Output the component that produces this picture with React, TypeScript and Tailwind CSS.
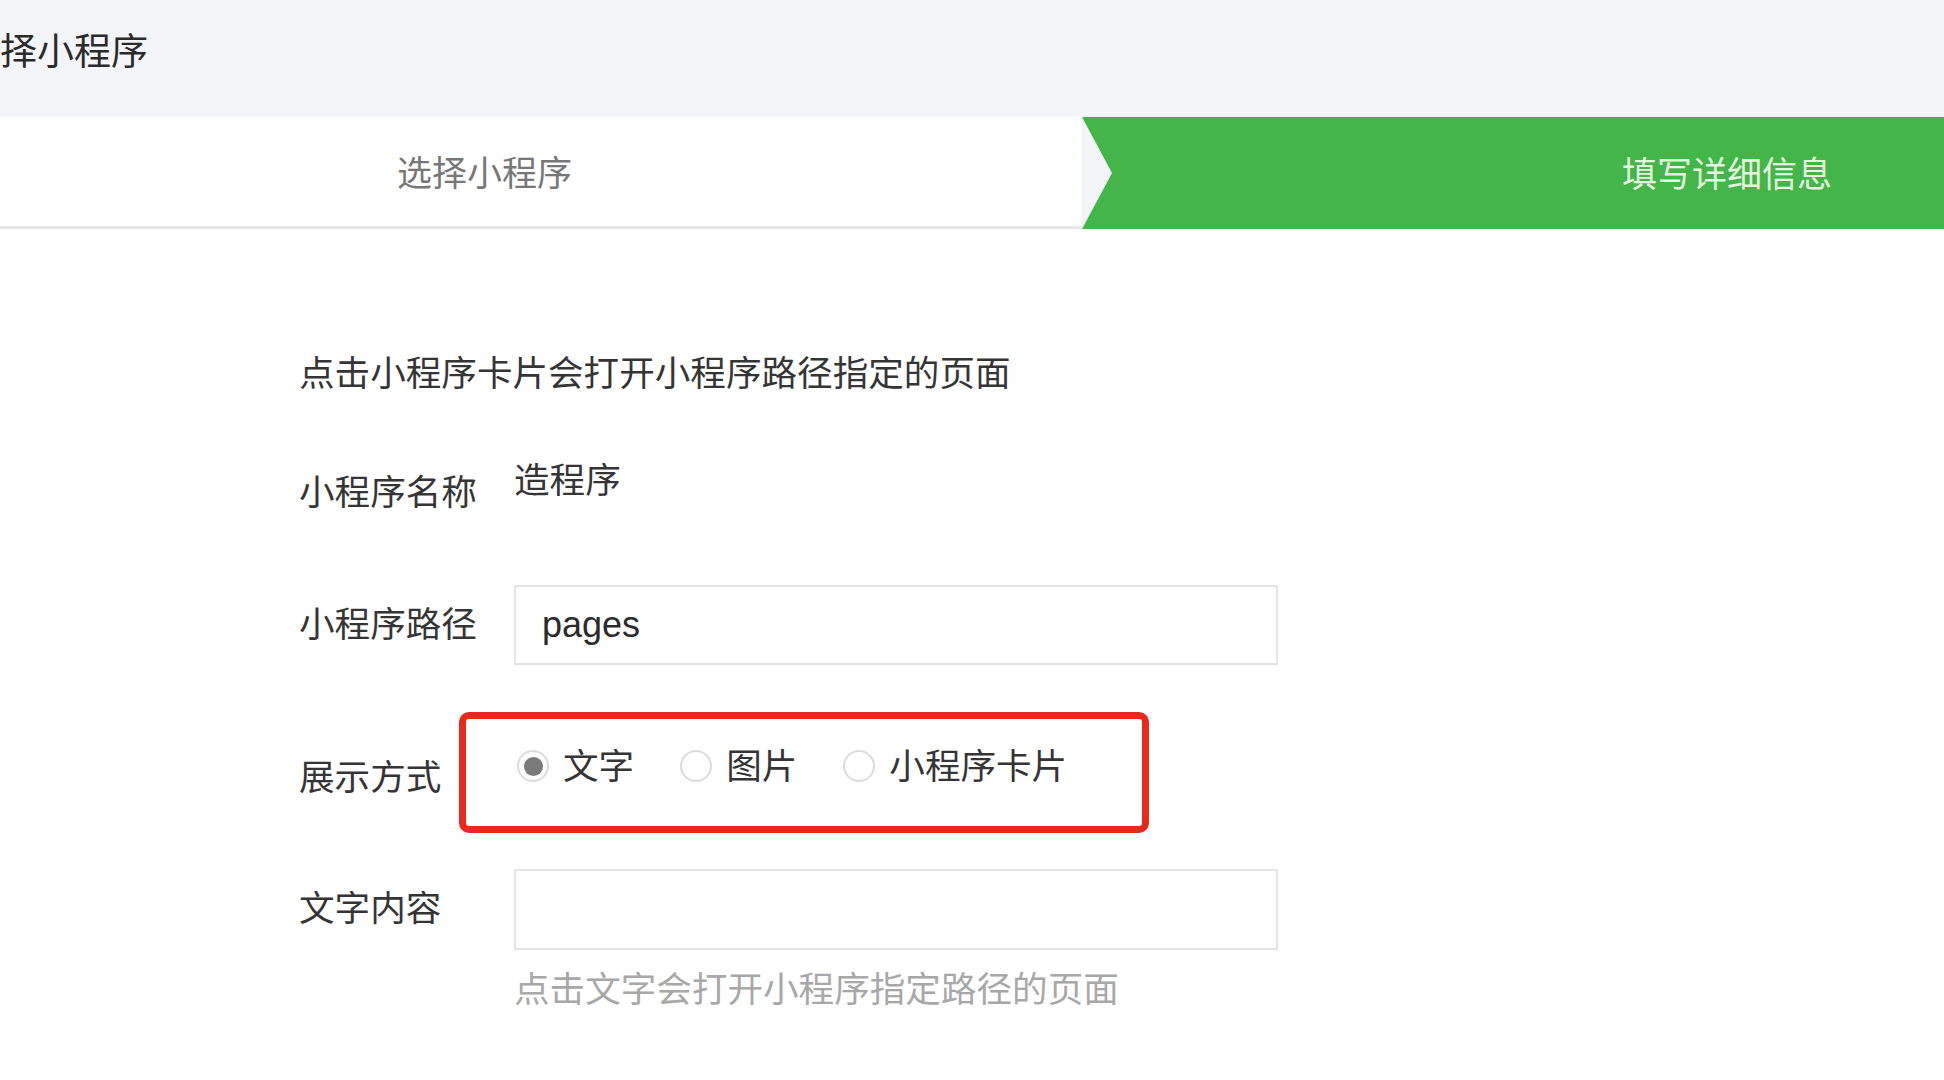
import { useState } from "react";

const labelCls = "w-[215px] shrink-0 text-[#353535]";

const App = () => {
  const [mode, setMode] = useState("text");

  return (
    <div className="w-[1944px] h-[1080px] overflow-hidden bg-white font-['Noto_Sans_CJK_SC','Noto_Sans',sans-serif] text-[35.6px] leading-[44px] text-[#353535]">
      {/* HEADER */}
      <div className="h-[117px] bg-[#f4f5f9] pt-[27px]">
        <h1 className="ml-[-37px] text-[37px] leading-[44px] text-[#2b2b2b] whitespace-nowrap">选择小程序</h1>
      </div>

      {/* STEPS */}
      <div className="flex h-[112px] bg-[#f4f5f9]">
        <div className="w-[1082px] shrink-0 flex items-center pl-[397px] pb-[2px] bg-white border-b-[3px] border-[#e6e6e6] text-[35px] text-[#777]">
          选择小程序
        </div>
        <div className="flex-1 flex items-center pl-[540px] pb-[3px] bg-[#44b549] text-[35px] text-[#e4f6df] [clip-path:polygon(0_0,100%_0,100%_100%,0_100%,30px_50%)]">
          填写详细信息
        </div>
      </div>

      {/* FORM */}
      <div className="pl-[299px]">
        <p className="mt-[120px]">点击小程序卡片会打开小程序路径指定的页面</p>

        <div className="flex items-start mt-[63px]">
          <div className={labelCls + " pt-[12px]"}>小程序名称</div>
          <div>造程序</div>
        </div>

        <div className="flex items-center mt-[73px]">
          <div className={labelCls + " pb-[7px]"}>小程序路径</div>
          <input
            type="text"
            defaultValue="pages"
            className="w-[764px] h-[80px] px-[26px] border-2 border-[#e4e4e4] bg-white outline-0 text-[36px] text-[#2b2b2b] font-['Liberation_Sans',sans-serif]"
          />
        </div>

        <div className="flex items-center mt-[47px]">
          <div className="w-[160px] shrink-0 pt-[4px]">展示方式</div>
          <div className="w-[690px] h-[121px] flex items-center gap-[46px] pl-[51px] pb-[17px] border-[7px] border-[#e8291c] rounded-[10px]">
            {[
              ["text", "文字"],
              ["image", "图片"],
              ["card", "小程序卡片"],
            ].map(([k, v]) => (
              <label key={k} onClick={() => setMode(k)} className="flex items-center gap-[14px] cursor-pointer">
                <span className="w-[32px] h-[32px] mt-[4px] rounded-full border-2 border-[#dcdcdc] bg-white flex items-center justify-center">
                  {mode === k && <span className="w-[19px] h-[19px] rounded-full bg-[#7a7a7a]"></span>}
                </span>
                <span>{v}</span>
              </label>
            ))}
          </div>
        </div>

        <div className="flex items-center mt-[36px]">
          <div className={labelCls + " pb-[8px]"}>文字内容</div>
          <input
            type="text"
            className="w-[764px] h-[81px] px-[26px] border-2 border-[#e4e4e4] bg-white outline-0 text-[36px]"
          />
        </div>

        <p className="mt-[15px] ml-[215px] text-[#a8a8a8]">点击文字会打开小程序指定路径的页面</p>
      </div>
    </div>
  );
};

export default App;
